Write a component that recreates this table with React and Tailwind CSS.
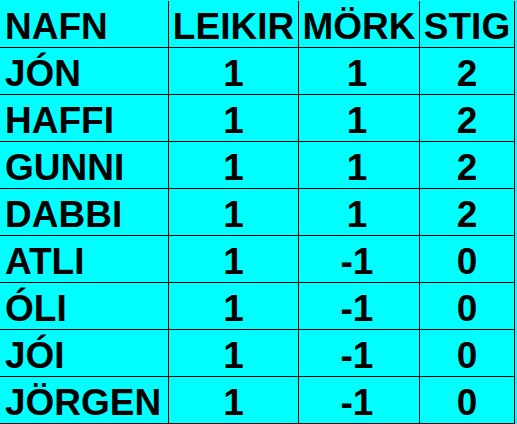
import React from 'react';

const rows = [
  ['JÓN', '1', '1', '2'],
  ['HAFFI', '1', '1', '2'],
  ['GUNNI', '1', '1', '2'],
  ['DABBI', '1', '1', '2'],
  ['ATLI', '1', '-1', '0'],
  ['ÓLI', '1', '-1', '0'],
  ['JÓI', '1', '-1', '0'],
  ['JÖRGEN', '1', '-1', '0'],
];

const cell = 'flex items-center h-[47px] border-b border-r border-black pt-[4px]';

function Row({ cols }) {
  return (
    <div className="grid grid-cols-[169px_130px_121px_95px]">
      <div className={`${cell} pl-[5px]`}>{cols[0]}</div>
      <div className={`${cell} justify-center`}>{cols[1]}</div>
      <div className={`${cell} justify-center pr-[4px]`}>{cols[2]}</div>
      <div className={`${cell} justify-center`}>{cols[3]}</div>
    </div>
  );
}

export default function App() {
  return (
    <div
      className="w-[517px] h-[424px] bg-[#00ffff] text-black font-bold text-[37px] leading-none overflow-hidden"
      style={{ fontFamily: '"Liberation Sans", Arial, sans-serif' }}
    >
      {/* header */}
      <div className="grid grid-cols-[169px_130px_121px_95px] pt-[1px]">
        <div className={`${cell} pl-[5px]`}>NAFN</div>
        <div className={`${cell} justify-center`}>LEIKIR</div>
        <div className={`${cell} justify-center`}>MÖRK</div>
        <div className={`${cell} justify-center`}>STIG</div>
      </div>
      {rows.map((r) => (
        <Row key={r[0]} cols={r} />
      ))}
    </div>
  );
}
